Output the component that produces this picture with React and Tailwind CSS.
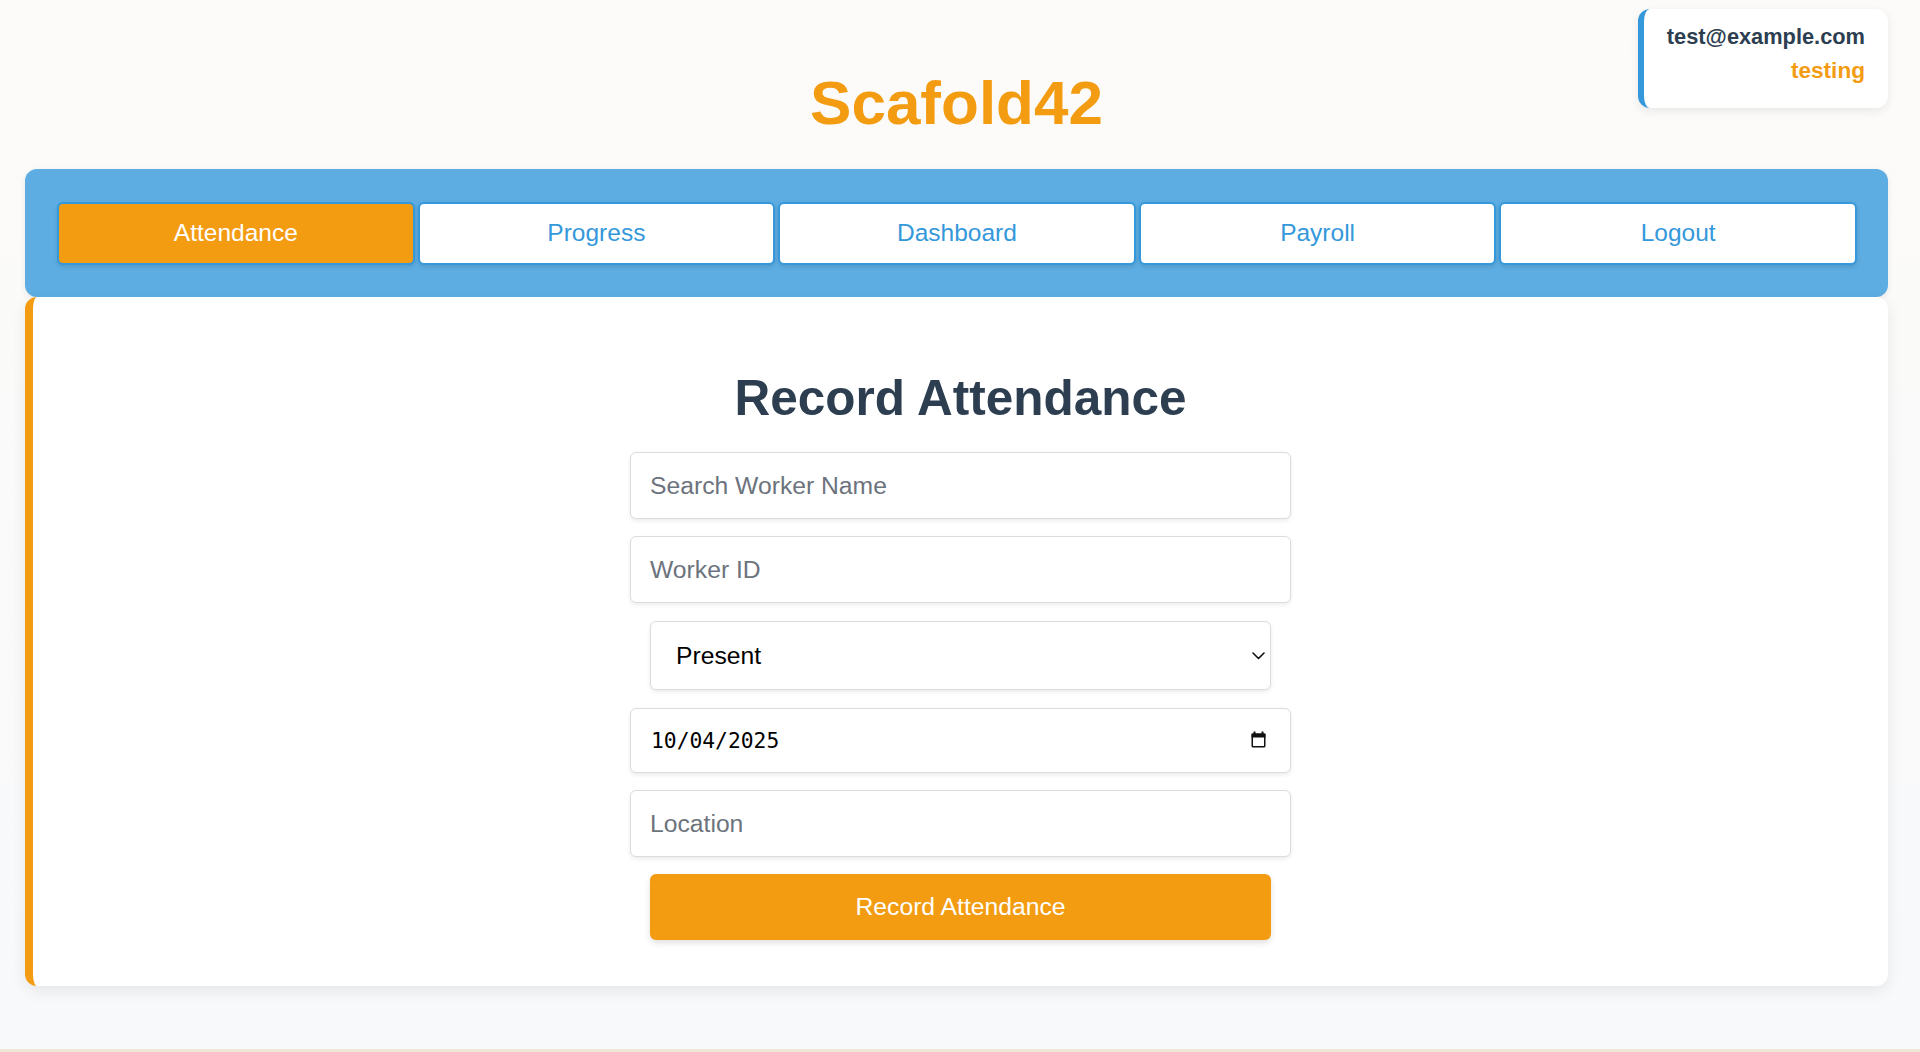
import React from "react";

const navItems = ["Attendance", "Progress", "Dashboard", "Payroll", "Logout"];

function Chevron() {
  return (
    <svg width="13" height="8" viewBox="0 0 13 8" fill="none" className="pointer-events-none absolute right-[6px] top-[31px]">
      <polyline points="1,1 6.5,6.5 12,1" stroke="#111" strokeWidth="1.6" strokeLinecap="round" strokeLinejoin="round" />
    </svg>
  );
}

function CalendarIcon() {
  return (
    <svg width="15" height="17" viewBox="0 0 15 17" fill="none" className="pointer-events-none absolute right-[25px] top-[23px]">
      <rect x="2.5" y="0.5" width="2" height="3" fill="#111" />
      <rect x="10.5" y="0.5" width="2" height="3" fill="#111" />
      <rect x="0.5" y="2.5" width="14" height="4" fill="#111" />
      <rect x="1.25" y="3.25" width="12.5" height="12.5" rx="0.8" stroke="#111" strokeWidth="1.5" />
    </svg>
  );
}

export default function App() {
  return (
    <div className="h-[1052px] flex flex-col bg-linear-to-b from-[#fcfbf9] to-[#f8f9fb] font-['Liberation_Sans',Arial,sans-serif] overflow-hidden">
      <div className="relative ml-[25px] mr-[32px]">
        {/* user box */}
        <div className="absolute right-0 top-[9px] w-[250px] h-[99px] bg-white rounded-xl border-l-[6px] border-[#3498db] shadow-[0_3px_10px_rgba(0,0,0,0.08)] pt-[15px] pr-[23px] text-right">
          <div className="text-[21.8px] leading-[26px] font-bold text-[#2c3e50]">test@example.com</div>
          <div className="mt-[8px] text-[22.6px] leading-[26px] font-bold text-[#f39c12]">testing</div>
        </div>

        {/* header */}
        <div className="h-[169px] pt-[68px]">
          <h1 className="text-center text-[62px] leading-[70px] font-bold text-[#f39c12]">Scafold42</h1>
        </div>

        {/* nav */}
        <nav className="flex gap-[3px] rounded-xl bg-[#5dade2] pl-[32px] pr-[31px] pt-[33px] pb-[32px] shadow-[0_2px_6px_rgba(0,0,0,0.08)]">
          {navItems.map((item, i) => (
            <button
              key={item}
              className={
                i === 0
                  ? "flex-1 h-[63px] rounded-[6px] border-2 border-[#3498db] bg-[#f39c12] text-white text-[24.5px] shadow-[0_2px_4px_rgba(0,0,0,0.12)]"
                  : "flex-1 h-[63px] rounded-[6px] border-2 border-[#3498db] bg-white text-[#3498db] text-[24.5px] shadow-[0_2px_4px_rgba(0,0,0,0.12)]"
              }
            >
              {item}
            </button>
          ))}
        </nav>

        {/* card */}
        <div className="flex flex-col items-center rounded-xl bg-white border-l-[8px] border-[#f39c12] pt-[73px] pb-[46px] shadow-[0_5px_15px_rgba(0,0,0,0.08)]">
          <h2 className="h-[56px] leading-[56px] text-[49.5px] font-bold text-[#2c3e50]">Record Attendance</h2>

          <input
            type="text"
            placeholder="Search Worker Name"
            className="mt-[26px] w-[661px] h-[67px] shrink-0 rounded-[6px] border border-[#dcdcdc] bg-white pl-[19px] text-[24.7px] text-[#222] placeholder:text-[#6c737d] shadow-[0_2px_4px_rgba(0,0,0,0.08)] outline-none"
          />
          <input
            type="text"
            placeholder="Worker ID"
            className="mt-[17px] w-[661px] h-[67px] shrink-0 rounded-[6px] border border-[#dcdcdc] bg-white pl-[19px] text-[24.7px] text-[#222] placeholder:text-[#6c737d] shadow-[0_2px_4px_rgba(0,0,0,0.08)] outline-none"
          />
          <div className="relative mt-[18px] w-[621px] h-[69px] shrink-0">
            <select
              defaultValue="Present"
              className="w-full h-full appearance-none rounded-[6px] border border-[#dcdcdc] bg-white pl-[25px] text-[24.7px] text-black shadow-[0_2px_4px_rgba(0,0,0,0.08)] outline-none"
            >
              <option>Present</option>
              <option>Absent</option>
              <option>Late</option>
            </select>
            <Chevron />
          </div>
          <div className="relative mt-[18px] w-[661px] h-[65px] shrink-0">
            <input
              type="text"
              defaultValue="10/04/2025"
              className="w-full h-full rounded-[6px] border border-[#dcdcdc] bg-white pl-[20px] font-['DejaVu_Sans_Mono',monospace] text-[21.3px] text-black shadow-[0_2px_4px_rgba(0,0,0,0.08)] outline-none"
            />
            <CalendarIcon />
          </div>
          <input
            type="text"
            placeholder="Location"
            className="mt-[17px] w-[661px] h-[67px] shrink-0 rounded-[6px] border border-[#dcdcdc] bg-white pl-[19px] text-[24.7px] text-[#222] placeholder:text-[#6c737d] shadow-[0_2px_4px_rgba(0,0,0,0.08)] outline-none"
          />
          <button className="mt-[17px] w-[621px] h-[66px] shrink-0 rounded-[6px] bg-[#f39c12] text-white text-[24.7px] shadow-[0_3px_6px_rgba(0,0,0,0.12)]">
            Record Attendance
          </button>
        </div>
      </div>
      <div className="flex-1" />
      <div className="h-[3px] bg-[#efe7d6]" />
    </div>
  );
}
